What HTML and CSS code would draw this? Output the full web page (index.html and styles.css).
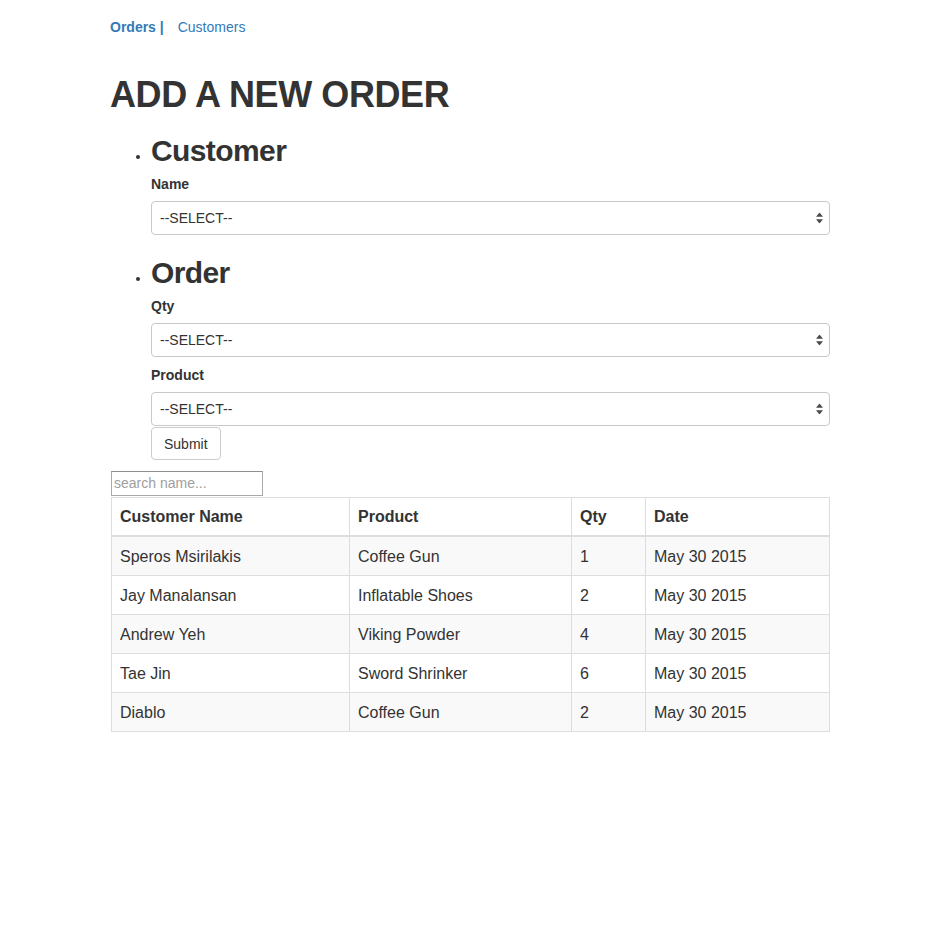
FILE: index.html
```html
<!DOCTYPE html>
<html lang="en">
<head>
<meta charset="utf-8">
<title>Add a new order</title>
<link rel="stylesheet" href="styles.css">
</head>
<body>
<div class="container">
  <nav class="topnav">
    <a href="#" class="nav-link nav-current">Orders |</a>
    <a href="#" class="nav-link">Customers</a>
  </nav>

  <h1 class="page-title">ADD A NEW ORDER</h1>

  <ul class="sections">
    <li class="section">
      <h2 class="section-title">Customer</h2>
      <div class="field">
        <label class="field-label">Name</label>
        <div class="select-wrap">
          <select class="select"><option>--SELECT--</option></select>
          <svg class="select-arrows" width="7" height="11" viewBox="0 0 7 11"><polygon points="0,4.2 3.5,0 7,4.2"/><polygon points="0,6.8 7,6.8 3.5,11"/></svg>
        </div>
      </div>
    </li>
    <li class="section">
      <h2 class="section-title">Order</h2>
      <div class="field">
        <label class="field-label">Qty</label>
        <div class="select-wrap">
          <select class="select"><option>--SELECT--</option></select>
          <svg class="select-arrows" width="7" height="11" viewBox="0 0 7 11"><polygon points="0,4.2 3.5,0 7,4.2"/><polygon points="0,6.8 7,6.8 3.5,11"/></svg>
        </div>
      </div>
      <div class="field field-last">
        <label class="field-label">Product</label>
        <div class="select-wrap">
          <select class="select"><option>--SELECT--</option></select>
          <svg class="select-arrows" width="7" height="11" viewBox="0 0 7 11"><polygon points="0,4.2 3.5,0 7,4.2"/><polygon points="0,6.8 7,6.8 3.5,11"/></svg>
        </div>
      </div>
      <button class="btn" type="button">Submit</button>
    </li>
  </ul>

  <input class="search" type="text" placeholder="search name...">

  <table class="orders">
    <thead>
      <tr>
        <th class="col-name">Customer Name</th>
        <th class="col-product">Product</th>
        <th class="col-qty">Qty</th>
        <th class="col-date">Date</th>
      </tr>
    </thead>
    <tbody>
      <tr><td>Speros Msirilakis</td><td>Coffee Gun</td><td>1</td><td>May 30 2015</td></tr>
      <tr><td>Jay Manalansan</td><td>Inflatable Shoes</td><td>2</td><td>May 30 2015</td></tr>
      <tr><td>Andrew Yeh</td><td>Viking Powder</td><td>4</td><td>May 30 2015</td></tr>
      <tr><td>Tae Jin</td><td>Sword Shrinker</td><td>6</td><td>May 30 2015</td></tr>
      <tr><td>Diablo</td><td>Coffee Gun</td><td>2</td><td>May 30 2015</td></tr>
    </tbody>
  </table>
</div>
</body>
</html>
```

FILE: styles.css
```css
* { box-sizing: border-box; }

html, body {
  margin: 0;
  padding: 0;
  background: #fff;
}

body {
  font-family: "Liberation Sans", Arial, sans-serif;
  font-size: 14px;
  line-height: 20px;
  color: #333;
}

.container {
  width: 720px;
  margin: 0 auto;
}

.topnav {
  display: flex;
  align-items: baseline;
  padding-top: 17px;
  line-height: 20px;
}

.nav-link {
  color: #337ab7;
  text-decoration: none;
}

.nav-current {
  font-weight: bold;
  margin-right: 14px;
}

.page-title {
  margin: 38px 0 0;
  font-size: 36px;
  line-height: 39.6px;
  font-weight: 600;
  letter-spacing: -0.4px;
  color: #333;
}

.sections {
  margin: 0;
  padding-left: 41px;
  list-style: disc;
}

.section-title {
  margin: 19px 0 7px;
  font-size: 30px;
  line-height: 33px;
  font-weight: 600;
  letter-spacing: -0.6px;
  color: #333;
}

.section + .section .section-title {
  margin-top: 21px;
}

.field {
  display: flex;
  flex-direction: column;
}

.field + .field {
  margin-top: 8px;
}

.field-label {
  font-weight: bold;
  font-size: 14px;
  line-height: 20px;
  margin-bottom: 7px;
}

.select-wrap {
  position: relative;
}

.select {
  appearance: none;
  -webkit-appearance: none;
  display: block;
  width: 100%;
  height: 34px;
  padding: 0 8px;
  border: 1px solid #c9c9c9;
  border-radius: 4px;
  background: #fff;
  font-family: "Liberation Sans", Arial, sans-serif;
  font-size: 14px;
  color: #333;
}

.select-arrows {
  position: absolute;
  right: 7px;
  top: 50%;
  transform: translateY(-50%);
  fill: #4a4a4a;
  pointer-events: none;
}

.btn {
  display: inline-block;
  margin-top: 1px;
  padding: 6px 12px;
  height: 33px;
  border: 1px solid #ccc;
  border-radius: 4px;
  background: #fff;
  font-family: "Liberation Sans", Arial, sans-serif;
  font-size: 14px;
  line-height: 20px;
  color: #333;
}

.search {
  display: block;
  margin: 11px 0 0 1px;
  width: 152px;
  height: 25px;
  padding: 1px 2px;
  border: 1px solid #a9a9a9;
  border-top-color: #8f8f8f;
  border-radius: 0;
  font-family: "Liberation Sans", Arial, sans-serif;
  font-size: 14px;
  color: #333;
}

.search::placeholder {
  color: #a0a0a0;
}

.orders {
  margin: 1px 0 0 1px;
  width: 719px;
  border-collapse: collapse;
  border: 1px solid #ddd;
  font-size: 16px;
  line-height: 22px;
}

.orders th,
.orders td {
  text-align: left;
  padding: 9px 8px 7px;
  border: 1px solid #ddd;
  vertical-align: top;
}

.orders th {
  padding-top: 8px;
  padding-bottom: 7px;
  font-weight: bold;
  border-bottom: 2px solid #ddd;
}

.orders tbody tr:nth-child(odd) {
  background: #f9f9f9;
}

.col-name { width: 238px; }
.col-product { width: 222px; }
.col-qty { width: 74px; }
```
